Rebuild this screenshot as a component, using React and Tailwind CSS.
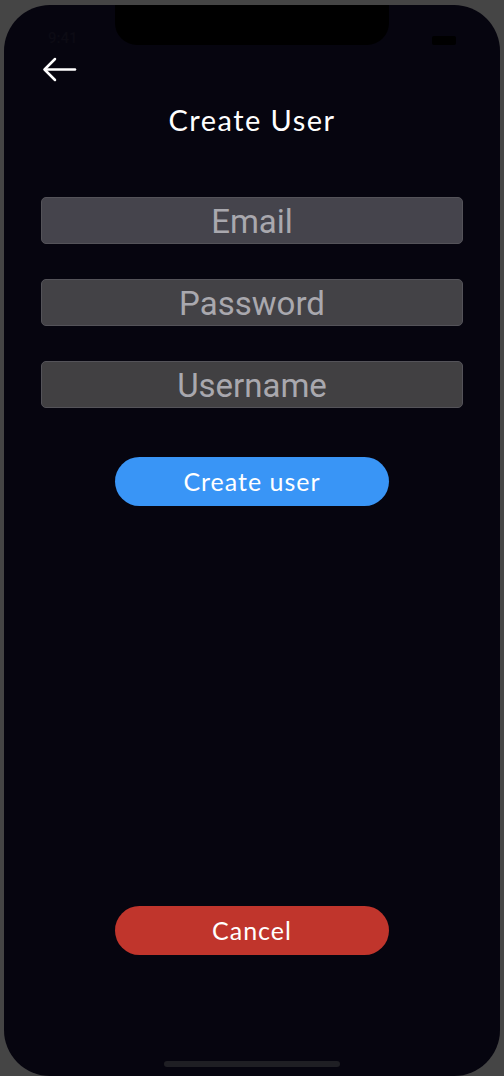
export default function App() {
  const fields = [
    { label: "Email", bg: "bg-[#45444c]" },
    { label: "Password", bg: "bg-[#434246]" },
    { label: "Username", bg: "bg-[#414042]" },
  ];
  return (
    <div className="h-[1076px] w-[504px] overflow-hidden bg-[#454545] pl-[4px] pr-[4px] pt-[5px]">
      <div className="relative flex h-[1071px] flex-col rounded-[46px] bg-[#06050f] font-['Lato',sans-serif]">
        {/* notch */}
        <div className="absolute left-[111px] top-0 h-[40px] w-[274px] rounded-b-[22px] bg-black" />
        {/* status bar */}
        <div className="flex h-[50px] items-end justify-between px-[44px] pb-[6px]">
          <span className="font-['Roboto',sans-serif] text-[15px] font-medium text-[#0c0b14]">9:41</span>
          <span className="mb-[4px] h-[9px] w-[24px] rounded-[2px] bg-black" />
        </div>

        <button type="button" className="ml-[37px] flex h-[30px] w-[38px] items-center text-white">
          <svg width="36" height="28" viewBox="0 0 36 28" fill="none" stroke="currentColor" strokeWidth="2.5" strokeLinecap="round" strokeLinejoin="round">
            <path d="M34 13.5H4" />
            <path d="M14 3L3.5 13.5L14 24" />
          </svg>
        </button>

        <h1 className="mt-[18px] text-center text-[29px] leading-[34px] tracking-[0.05em] text-white">Create User</h1>

        <div className="mt-[60px] flex flex-col gap-[35px] px-[37px]">
          {fields.map((f) => (
            <input
              key={f.label}
              placeholder={f.label}
              className={`h-[47px] w-full rounded-[5px] border border-[#545359] ${f.bg} pt-[3px] text-center font-['Roboto',sans-serif] text-[33px] text-white outline-none placeholder:text-[#a9a8ae]`}
            />
          ))}
        </div>

        <button
          type="button"
          className="mx-auto mt-[49px] h-[49px] w-[274px] rounded-full bg-[#3995f6] text-[25px] tracking-[0.04em] text-white"
        >
          Create user
        </button>

        <div className="flex-1" />

        <button
          type="button"
          className="mx-auto mb-[121px] h-[49px] w-[274px] rounded-full bg-[#c0352c] text-[25px] tracking-[0.04em] text-white"
        >
          Cancel
        </button>

        <div className="absolute bottom-[9px] left-[160px] h-[6px] w-[176px] rounded-full bg-[#1f1f24]" />
      </div>
    </div>
  );
}
